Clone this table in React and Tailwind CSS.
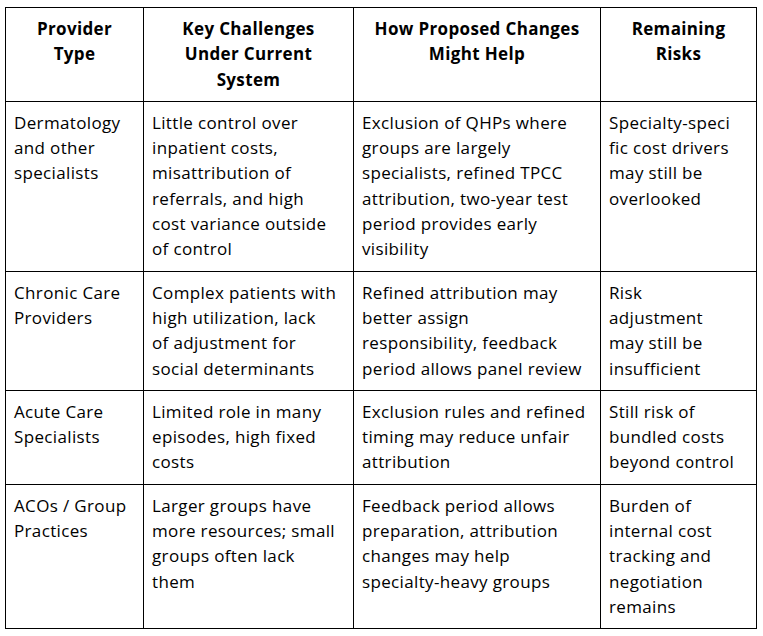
import React from "react";

const headers = [
  ["Provider", "Type"],
  ["Key Challenges", "Under Current", "System"],
  ["How Proposed Changes", "Might Help"],
  ["Remaining", "Risks"],
];

const rows = [
  [
    ["Dermatology", "and other", "specialists"],
    [
      "Little control over",
      "inpatient costs,",
      "misattribution of",
      "referrals, and high",
      "cost variance outside",
      "of control",
    ],
    [
      "Exclusion of QHPs where",
      "groups are largely",
      "specialists, refined TPCC",
      "attribution, two-year test",
      "period provides early",
      "visibility",
    ],
    ["Specialty-speci", "fic cost drivers", "may still be", "overlooked"],
  ],
  [
    ["Chronic Care", "Providers"],
    [
      "Complex patients with",
      "high utilization, lack",
      "of adjustment for",
      "social determinants",
    ],
    [
      "Refined attribution may",
      "better assign",
      "responsibility, feedback",
      "period allows panel review",
    ],
    ["Risk", "adjustment", "may still be", "insufficient"],
  ],
  [
    ["Acute Care", "Specialists"],
    ["Limited role in many", "episodes, high fixed", "costs"],
    [
      "Exclusion rules and refined",
      "timing may reduce unfair",
      "attribution",
    ],
    ["Still risk of", "bundled costs", "beyond control"],
  ],
  [
    ["ACOs / Group", "Practices"],
    ["Larger groups have", "more resources; small", "groups often lack", "them"],
    [
      "Feedback period allows",
      "preparation, attribution",
      "changes may help",
      "specialty-heavy groups",
    ],
    ["Burden of", "internal cost", "tracking and", "negotiation", "remains"],
  ],
];

const Lines = ({ lines }) =>
  lines.map((line, i) => (
    <span key={i} className="block whitespace-nowrap">
      {line}
    </span>
  ));

export default function App() {
  return (
    <div
      className="min-h-screen w-full bg-white pl-[5px] pt-[7px] text-black"
      style={{ fontFamily: '"Open Sans", "Noto Sans", sans-serif' }}
    >
      <table className="w-[751px] table-fixed border-collapse text-[17px] leading-[25.3px] tracking-[0.35px]">
        <colgroup>
          <col className="w-[138px]" />
          <col className="w-[210px]" />
          <col className="w-[247px]" />
          <col className="w-[156px]" />
        </colgroup>
        <thead>
          <tr>
            {headers.map((h, i) => (
              <th
                key={i}
                className="border border-black px-2 pt-2 pb-[9px] text-center align-top font-bold"
              >
                <Lines lines={h} />
              </th>
            ))}
          </tr>
        </thead>
        <tbody>
          {rows.map((row, r) => (
            <tr key={r}>
              {row.map((cell, c) => (
                <td
                  key={c}
                  className="border border-black px-2 pt-2 pb-[9px] text-left align-top"
                >
                  <Lines lines={cell} />
                </td>
              ))}
            </tr>
          ))}
        </tbody>
      </table>
    </div>
  );
}
